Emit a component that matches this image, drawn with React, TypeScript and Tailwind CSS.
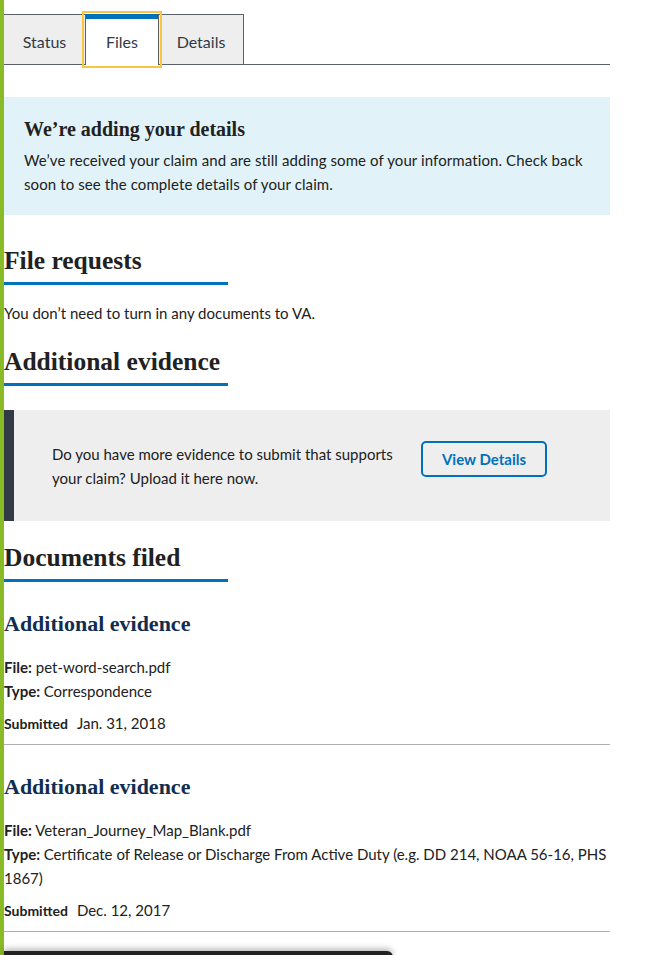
import React from "react";

const serif = "font-['Liberation_Serif',serif]";

function H2({ children }: { children: React.ReactNode }) {
  return (
    <div className="w-[224px] border-b-[3px] border-[#0071bb] pb-[6px]">
      <h2 className={`${serif} text-[25.5px] font-bold leading-[30px] text-[#212121]`}>{children}</h2>
    </div>
  );
}

function Doc({ file, type, date }: { file: string; type: React.ReactNode; date: string }) {
  return (
    <div className="border-b border-[#aeb0b5] pb-[8px]">
      <h3 className={`${serif} text-[22px] font-bold leading-[28px] text-[#112e51] mt-[28px] mb-[17px]`}>Additional evidence</h3>
      <p className="leading-[24px]"><span className="font-bold">File:</span> {file}</p>
      <p className="leading-[24px]"><span className="font-bold">Type: </span>{type}</p>
      <p className="mt-[8px] leading-[24px]">
        <span className="font-bold text-[14px]">Submitted</span>
        <span className="ml-[9px]">{date}</span>
      </p>
    </div>
  );
}

export default function App() {
  return (
    <div className="flex min-h-[955px] bg-white font-['Lato',sans-serif] text-[15px] text-[#212121]">
      <div className="w-[4px] shrink-0 bg-[#88bb26]" />
      <div className="w-[606px] shrink-0 pt-[14px]">
        {/* Tabs */}
        <div className="flex border-b border-[#5b616b] text-[16px] text-[#323a45]">
          <div className="w-[82px] h-[50px] flex items-center justify-center pt-[5px] bg-[#eeeeee] border-t border-r border-[#5b616b]">Status</div>
          <div className="relative w-[72px] h-[51px] -mb-px flex items-center justify-center bg-white border-t-[5px] border-[#0071bb]">
            Files
            <div className="absolute left-[-4px] right-[-4px] top-[-8px] bottom-[-3px] border-2 border-[#f9c642]" />
          </div>
          <div className="w-[86px] h-[50px] flex items-center justify-center pt-[5px] bg-[#eeeeee] border-t border-l border-r border-[#5b616b]">Details</div>
        </div>

        {/* Alert */}
        <div className="mt-[32px] bg-[#e1f3f8] px-[20px] pt-[20px] pb-[19px]">
          <h3 className={`${serif} text-[20px] font-bold leading-[24px] mb-[7px]`}>We’re adding your details</h3>
          <p className="leading-[24px] tracking-[0.1px]">We’ve received your claim and are still adding some of your information. Check back soon to see the complete details of your claim.</p>
        </div>

        <div className="mt-[31px]">
          <H2>File requests</H2>
        </div>
        <p className="mt-[16px] leading-[24px]">You don’t need to turn in any documents to VA.</p>

        <div className="mt-[22px]">
          <H2>Additional evidence</H2>
        </div>

        <div className="mt-[24px] flex bg-[#eeeeee] h-[111px]">
          <div className="w-[10px] bg-[#323a45]" />
          <div className="flex items-center pl-[38px]">
            <p className="w-[360px] leading-[24px]">Do you have more evidence to submit that supports your claim? Upload it here now.</p>
            <button className="ml-[9px] mb-[13px] w-[126px] h-[36px] rounded-[5px] border-2 border-[#0071bb] text-[#0071bb] font-bold text-[15px]">View Details</button>
          </div>
        </div>

        <div className="mt-[22px]">
          <H2>Documents filed</H2>
        </div>

        <Doc file="pet-word-search.pdf" type="Correspondence" date="Jan. 31, 2018" />
        <Doc
          file="Veteran_Journey_Map_Blank.pdf"
          type="Certificate of Release or Discharge From Active Duty (e.g. DD 214, NOAA 56-16, PHS 1867)"
          date="Dec. 12, 2017"
        />
        <div className="mt-[19px] w-[389px] h-[8px] rounded-tr-[6px] bg-[#222222] shadow-[0_-2px_6px_rgba(0,0,0,0.3)]" />
      </div>
    </div>
  );
}
